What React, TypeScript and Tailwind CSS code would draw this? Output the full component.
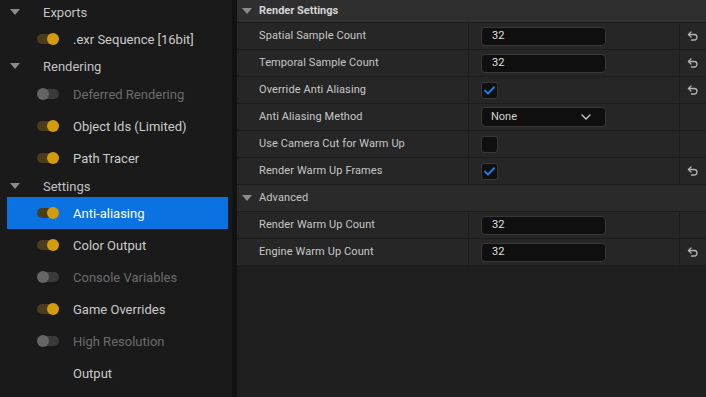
import React from "react";

const Tri = ({ className = "" }: { className?: string }) => (
  <svg width="10" height="6" viewBox="0 0 10 6" className={className}>
    <path d="M0 0 H10 L5 6 Z" fill="#8c8c8c" />
  </svg>
);

const Toggle = ({ on }: { on: boolean }) =>
  on ? (
    <div className="relative w-[22px] h-[12px]">
      <div className="absolute left-0 top-[1px] w-[20px] h-[10px] rounded-full bg-[#4a3d1f]" />
      <div className="absolute right-0 top-0 w-[12px] h-[12px] rounded-full bg-[#d39c0c]" />
    </div>
  ) : (
    <div className="relative w-[22px] h-[12px]">
      <div className="absolute right-0 top-[1px] w-[20px] h-[10px] rounded-full bg-[#3a3a3a]" />
      <div className="absolute left-0 top-0 w-[12px] h-[12px] rounded-full bg-[#656565]" />
    </div>
  );

const Reset = () => (
  <svg width="12" height="11" viewBox="0 0 24 22" fill="none" stroke="#b4b4b4" strokeWidth="2.6" strokeLinecap="round" strokeLinejoin="round">
    <path d="M8 12 3 7l5-5" />
    <path d="M3 7h11.5a5.5 5.5 0 0 1 0 11H9" />
  </svg>
);

const Check = ({ checked }: { checked: boolean }) => (
  <div className="w-[17px] h-[17px] rounded-[3px] bg-[#0f0f0f] border border-[#383838] flex items-center justify-center">
    {checked && (
      <svg width="11" height="9" viewBox="0 0 11 9" fill="none">
        <path d="M1 4.6 L4 7.6 L10 1.2" stroke="#1b7ee9" strokeWidth="2" strokeLinecap="round" strokeLinejoin="round" />
      </svg>
    )}
  </div>
);

const NumInput = ({ v }: { v: string }) => (
  <div className="w-[125px] h-[19px] rounded-[4px] bg-[#0f0f0f] border border-[#383838] flex items-center pl-[10px] text-[11px] text-[#e0e0e0]">
    {v}
  </div>
);

const Dropdown = () => (
  <div className="w-[125px] h-[20px] rounded-[4px] bg-[#0f0f0f] border border-[#383838] flex items-center justify-between pl-[9px] pr-[14px] text-[11px] text-[#d0d0d0]">
    <span>None</span>
    <svg width="10" height="6" viewBox="0 0 10 6" fill="none">
      <path d="M1 1 L5 5 L9 1" stroke="#c8c8c8" strokeWidth="1.4" strokeLinecap="round" strokeLinejoin="round" />
    </svg>
  </div>
);

type Row = { label: string; value: React.ReactNode; reset: boolean };

const PropRow = ({ r }: { r: Row }) => (
  <div className="flex h-[27px] border-b border-[#1c1c1c] bg-[#262626]">
    <div className="w-[232px] pl-[22px] flex items-center text-[11px] text-[#c6c6c6] border-r border-[#1c1c1c] tracking-[0.1px]">
      {r.label}
    </div>
    <div className="w-[211px] pl-[12px] flex items-center border-r border-[#1c1c1c]">{r.value}</div>
    <div className="flex-1 flex items-center pl-[7px]">{r.reset && <Reset />}</div>
  </div>
);

const Cat = ({ label, h }: { label: string; h: number }) => (
  <div className="flex items-center" style={{ height: h }}>
    <div className="w-[36px] pl-[3px]">
      <Tri />
    </div>
    <span className="text-[13px] text-[#c2c2c2] pt-[2px]">{label}</span>
  </div>
);

const Item = ({
  label,
  on,
  h = 32,
  sel = false,
  noToggle = false,
}: {
  label: string;
  on?: boolean;
  h?: number;
  sel?: boolean;
  noToggle?: boolean;
}) => (
  <div className={"flex items-center " + (sel ? "bg-[#0b72e1]" : "")} style={{ height: h }}>
    <div className="w-[66px] pl-[30px]">{!noToggle && <Toggle on={!!on} />}</div>
    <span
      className={
        "text-[13px] pt-[2px] " + (sel ? "text-white" : on || noToggle ? "text-[#cbcbcb]" : "text-[#6c6c6c]")
      }
    >
      {label}
    </span>
  </div>
);

export default function App() {
  const rows1: Row[] = [
    { label: "Spatial Sample Count", value: <NumInput v="32" />, reset: true },
    { label: "Temporal Sample Count", value: <NumInput v="32" />, reset: true },
    { label: "Override Anti Aliasing", value: <Check checked />, reset: true },
    { label: "Anti Aliasing Method", value: <Dropdown />, reset: false },
    { label: "Use Camera Cut for Warm Up", value: <Check checked={false} />, reset: false },
    { label: "Render Warm Up Frames", value: <Check checked />, reset: true },
  ];
  const rows2: Row[] = [
    { label: "Render Warm Up Count", value: <NumInput v="32" />, reset: false },
    { label: "Engine Warm Up Count", value: <NumInput v="32" />, reset: true },
  ];
  return (
    <div
      className="w-[706px] h-[397px] flex bg-[#131313] overflow-hidden"
      style={{ fontFamily: "Roboto, 'Liberation Sans', sans-serif" }}
    >
      <div className="w-[232px] h-full bg-[#1a1a1a] pl-[7px] pr-[4px] flex flex-col">
        <Cat label="Exports" h={24} />
        <Item label=".exr Sequence [16bit]" on h={30} />
        <Cat label="Rendering" h={24} />
        <Item label="Deferred Rendering" on={false} />
        <Item label="Object Ids (Limited)" on />
        <Item label="Path Tracer" on />
        <Cat label="Settings" h={23} />
        <Item label="Anti-aliasing" on sel />
        <Item label="Color Output" on />
        <Item label="Console Variables" on={false} />
        <Item label="Game Overrides" on />
        <Item label="High Resolution" on={false} />
        <Item label="Output" noToggle />
      </div>
      <div className="w-[5px] h-full bg-[#121212]" />
      <div className="flex-1 h-full bg-[#1e1e1e] flex flex-col">
        <div className="h-[23px] flex items-center border-b border-[#1c1c1c] bg-[#2f2f2f]">
          <div className="w-[22px] pl-[5px]">
            <Tri />
          </div>
          <span className="text-[11px] font-bold text-[#d4d4d4]">Render Settings</span>
        </div>
        {rows1.map((r) => (
          <PropRow key={r.label} r={r} />
        ))}
        <div className="h-[27px] flex items-center border-b border-[#1c1c1c] bg-[#2a2a2a]">
          <div className="w-[22px] pl-[5px]">
            <Tri />
          </div>
          <span className="text-[11px] text-[#c6c6c6] tracking-[0.1px]">Advanced</span>
        </div>
        {rows2.map((r) => (
          <PropRow key={r.label} r={r} />
        ))}
      </div>
    </div>
  );
}
